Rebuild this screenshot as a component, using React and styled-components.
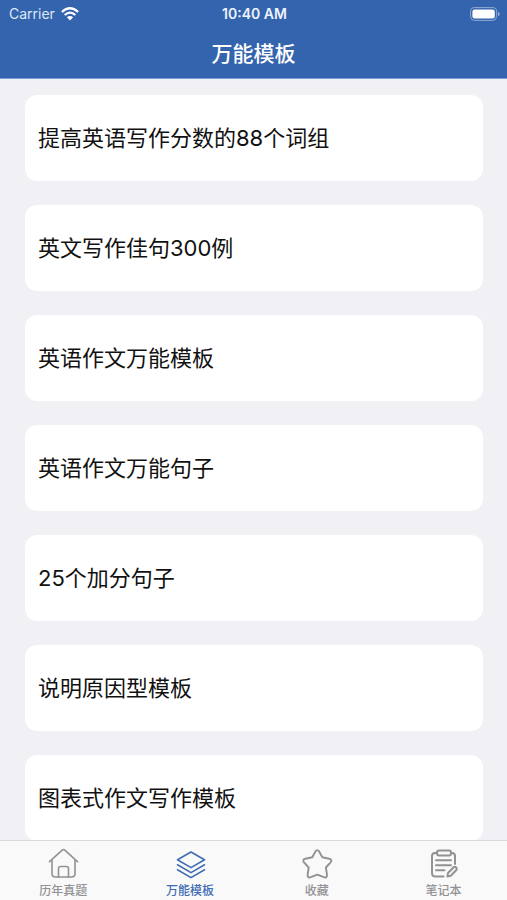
import React from 'react';
import styled, { createGlobalStyle } from 'styled-components';

const templates = [
    '提高英语写作分数的88个词组',
    '英文写作佳句300例',
    '英语作文万能模板',
    '英语作文万能句子',
    '25个加分句子',
    '说明原因型模板',
    '图表式作文写作模板',
];

const HomeIcon = () => (
    <svg viewBox="0 0 32 32" strokeWidth="1.6">
        <path d="M2.5 13.7 L15.2 2.2 Q16.5 1 17.8 2.2 L30.5 13.7" />
        <path d="M5 12 V25.5 Q5 29 8.5 29 H24.5 Q28 29 28 25.5 V12" />
        <path d="M11.5 29 V20.5 Q11.5 18.5 13.5 18.5 H19.5 Q21.5 18.5 21.5 20.5 V29" />
    </svg>
);

const LayersIcon = () => (
    <svg viewBox="0 0 32 32" strokeWidth="1.6">
        <path d="M17 4 L30.5 11.8 L17 19.6 L3.5 11.8 Z" />
        <path d="M3.5 16.8 L17 24.6 L30.5 16.8" />
        <path d="M3.5 21.8 L17 29.6 L30.5 21.8" />
    </svg>
);

const StarIcon = () => (
    <svg viewBox="0 0 32 32" strokeWidth="1.9">
        <path d="M14.5 3.4 Q16.3 0.8 18.1 3.4 L21.3 9.3 L28.2 10.7 Q31.6 11.7 29.6 14.3 L24.9 19.5 L26 26.8 Q26 30.3 22.8 29.2 L16.3 26.6 L9.8 29.2 Q6.6 30.3 6.6 26.8 L7.7 19.5 L3 14.3 Q1 11.7 4.4 10.7 L11.3 9.3 Z" />
    </svg>
);

const NoteIcon = () => (
    <svg viewBox="0 0 32 32" strokeWidth="2">
        <path d="M9 5 H7 Q4 5 4 8 V25 Q4 28.5 7.5 28.5 H15.5" />
        <path d="M23 5 H24 Q27 5 27 8 V16" />
        <rect x="9" y="2.6" width="14" height="5" rx="2" />
        <path d="M8 12.3 H23 M8 17.2 H23 M8 22.2 H16.5" />
        <path d="M19.4 28.6 L20 25 L25.7 19.2 Q27 18.4 28.2 19.5 Q29.4 20.8 28.4 22 L22.8 27.8 Z" />
    </svg>
);

const tabs = [
    { id: 'exam', label: '历年真题', icon: <HomeIcon /> },
    { id: 'template', label: '万能模板', icon: <LayersIcon /> },
    { id: 'favorite', label: '收藏', icon: <StarIcon /> },
    { id: 'notebook', label: '笔记本', icon: <NoteIcon /> },
];

function App() {
    const [active, setActive] = React.useState('template');

    return (
        <>
            <GlobalStyle />
            <Screen>
                <Header>
                    <StatusBar>
                        <Carrier>
                            Carrier
                            <svg width="18" height="14" viewBox="0 0 18 14" aria-hidden="true">
                                <g fill="none" stroke="#fff" strokeWidth="2.3">
                                    <path d="M0.9 5 Q9 -2.4 17.1 5" />
                                    <path d="M3.7 8 Q9 3.2 14.3 8" />
                                </g>
                                <path d="M9 13.4 L5.9 10.2 Q9 7.6 12.1 10.2 Z" fill="#fff" />
                            </svg>
                        </Carrier>
                        <Clock>10:40 AM</Clock>
                        <Battery>
                            <svg width="30" height="14" viewBox="0 0 30 14" aria-hidden="true">
                                <rect x="0.6" y="0.6" width="26" height="12.8" rx="4" fill="none" stroke="#fff" strokeOpacity="0.45" />
                                <rect x="2.4" y="2.4" width="22.4" height="9.2" rx="2.4" fill="#fff" />
                                <path d="M28 4.8 Q29.7 5.6 29.7 7 Q29.7 8.4 28 9.2 Z" fill="#fff" fillOpacity="0.5" />
                            </svg>
                        </Battery>
                    </StatusBar>
                    <Title>万能模板</Title>
                </Header>
                <List>
                    {templates.map((name) => (
                        <li key={name}>
                            <Card type="button">{name}</Card>
                        </li>
                    ))}
                </List>
                <TabBar>
                    {tabs.map((tab) => (
                        <Tab
                            key={tab.id}
                            type="button"
                            $active={active === tab.id}
                            onClick={() => setActive(tab.id)}
                        >
                            {tab.icon}
                            {tab.label}
                        </Tab>
                    ))}
                </TabBar>
            </Screen>
        </>
    );
}

const GlobalStyle = createGlobalStyle`
    * {
        box-sizing: border-box;
    }

    body {
        margin: 0;
        background: #f0f0f5;
        font-family: Inter, 'Noto Sans CJK SC', sans-serif;
    }

    button {
        border: none;
        font-family: inherit;
        cursor: pointer;
    }
`;

const Screen = styled.div`
    display: flex;
    flex-direction: column;
    height: 100vh;
`;

const Header = styled.header`
    flex-shrink: 0;
    padding-bottom: 8px;
    background: #3464ae;
    border-bottom: 1px solid #7b9fd6;
    color: #fff;
`;

const StatusBar = styled.div`
    display: grid;
    grid-template-columns: 1fr auto 1fr;
    align-items: center;
    height: 28px;
    padding: 0 7px 0 9px;
    font-size: 14px;
    line-height: 28px;
`;

const Carrier = styled.span`
    display: flex;
    align-items: center;
    gap: 6px;
    color: #dfe8f6;
`;

const Clock = styled.span`
    font-weight: 600;
    color: #eef3fb;
`;

const Battery = styled.span`
    display: flex;
    justify-content: flex-end;
`;

const Title = styled.h1`
    margin: 0;
    padding-top: 10px;
    font-size: 21px;
    font-weight: 500;
    line-height: 32px;
    text-align: center;
`;

const List = styled.ul`
    flex: 1;
    display: flex;
    flex-direction: column;
    gap: 24px;
    min-height: 0;
    margin: 0;
    padding: 16px 24px 24px 25px;
    overflow-y: auto;
    list-style: none;
    scrollbar-width: none;
`;

const Card = styled.button`
    display: block;
    width: 100%;
    height: 86px;
    padding: 0 13px 4px;
    border-radius: 12px;
    background: #fff;
    color: #111;
    font-size: 22px;
    text-align: left;
`;

const TabBar = styled.nav`
    flex-shrink: 0;
    display: grid;
    grid-template-columns: repeat(4, 1fr);
    height: 60px;
    background: #f9f9fa;
    border-top: 1px solid #d9d9db;
`;

const Tab = styled.button`
    display: flex;
    flex-direction: column;
    align-items: center;
    gap: 1px;
    padding: 7px 0 0;
    background: none;
    color: ${({ $active }) => ($active ? '#3f6db3' : '#929294')};
    font-size: 12px;
    font-weight: 500;
    line-height: 20px;

    svg {
        width: 32px;
        height: 32px;
        fill: none;
        stroke: currentColor;
        stroke-linecap: round;
        stroke-linejoin: round;
    }
`;

export default App;
